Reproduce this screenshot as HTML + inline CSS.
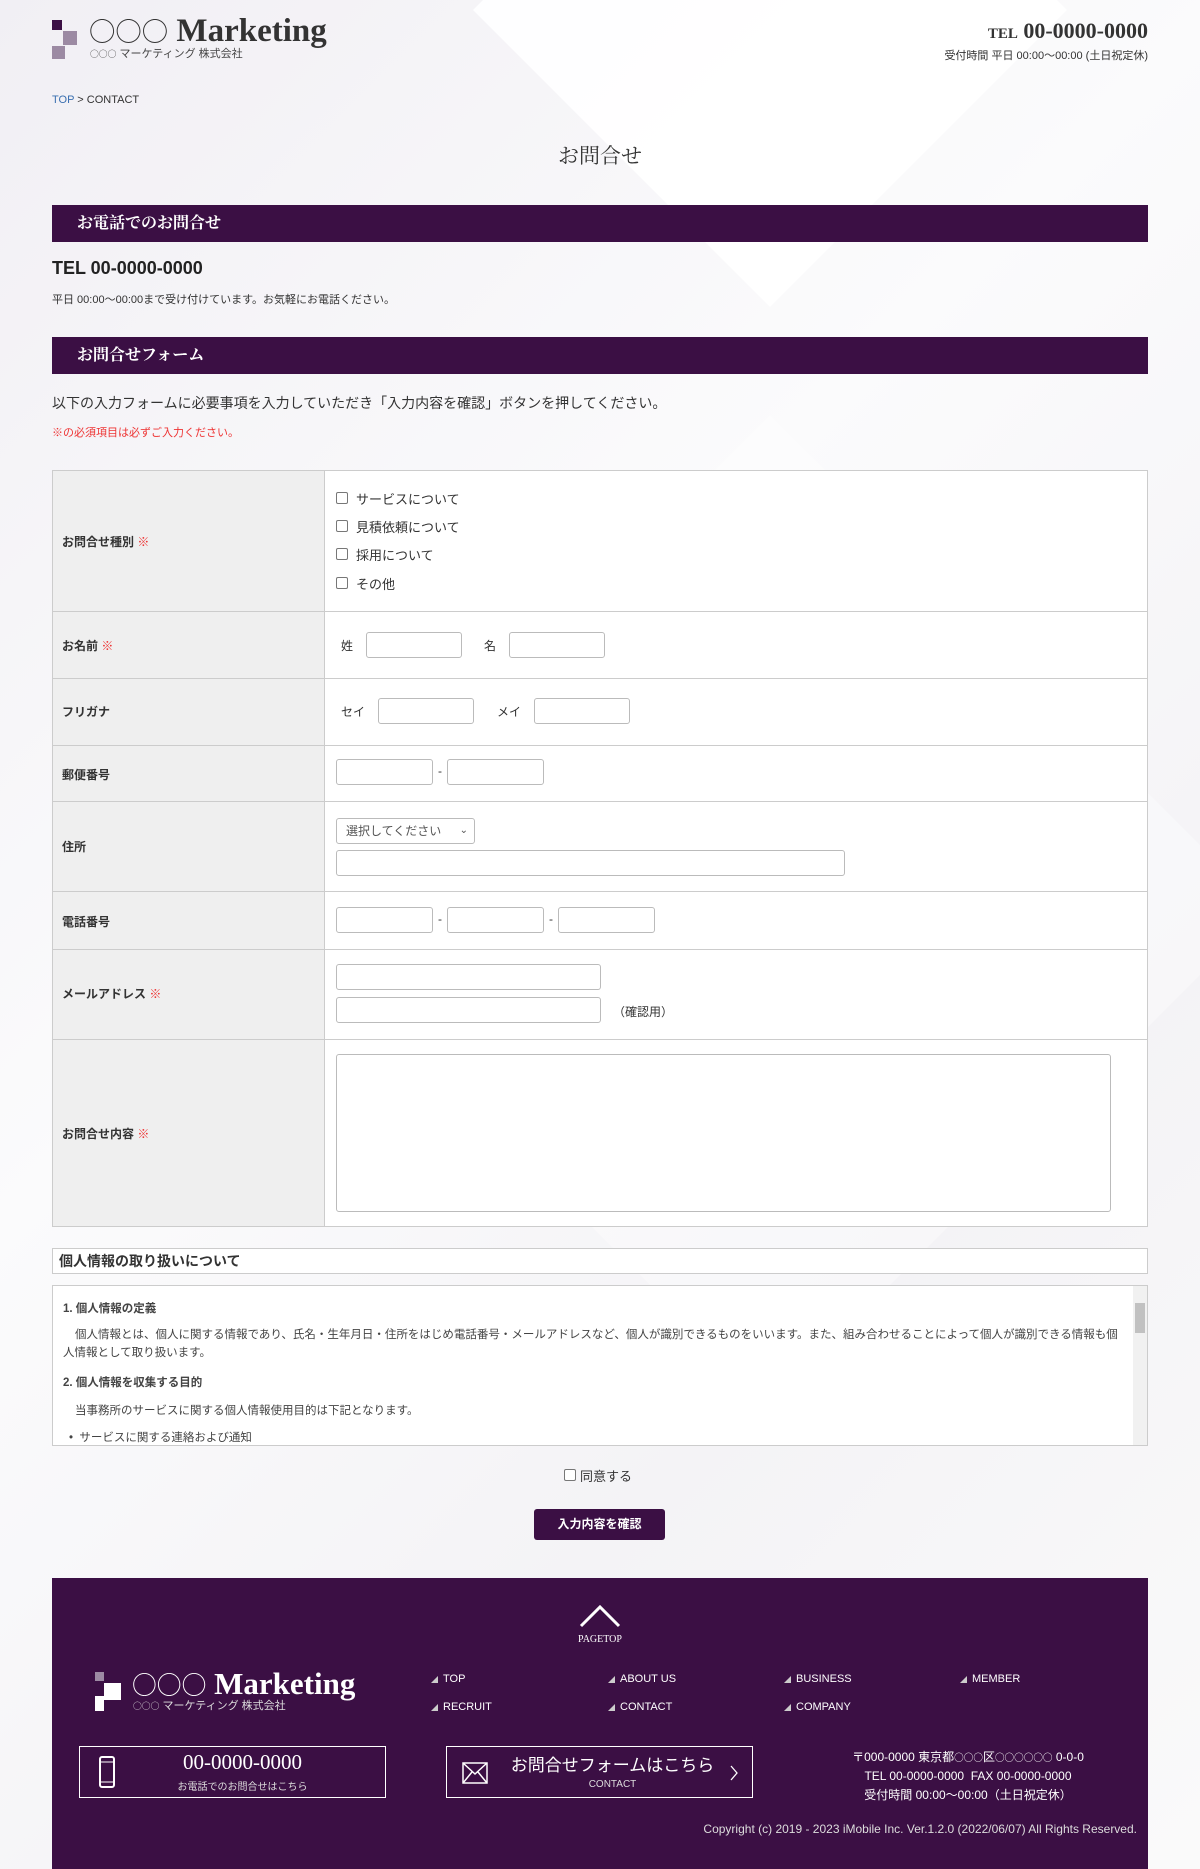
<!DOCTYPE html>
<html><head><meta charset="utf-8"><style>
*{margin:0;padding:0;box-sizing:border-box}
body{width:1200px;height:1869px;position:relative;overflow:hidden;font-family:"Liberation Sans","Noto Sans CJK JP",sans-serif;color:#333;background:#f7f6f9}
.a{position:absolute}
.bg1{left:0;top:0;width:1200px;height:1869px;background:linear-gradient(135deg,#f1eff4 0%,#fbfbfc 40%,#f4f3f6 70%,#fafafa 100%)}
.dia{background:#fff;transform:rotate(45deg)}
.serif{font-family:"Liberation Serif","Noto Serif CJK SC",serif}
.c{font-family:"Noto Sans CJK JP",sans-serif;font-weight:normal;font-size:.8em;line-height:1}
.bar{left:52px;width:1096px;height:37px;background:#3b0f44;color:#fff;font-size:16px;font-weight:bold;padding-left:25px;line-height:37px}
.in{position:absolute;border:1px solid #bbb;border-radius:3px;background:#fff;height:26px}
.t{font-size:12px;color:#333}
.cb{position:absolute;width:12px;height:12px;border:1px solid #777;border-radius:2px;background:#fff}
.row{position:absolute;left:52px;width:1096px;border-top:1px solid #ccc}
.lab{position:absolute;left:62px;font-size:12px;font-weight:bold;color:#333}
.req{color:#e33}
.fn{position:absolute;font-size:11px;color:#fff}
.fn:before{content:"◢";font-size:7px;margin-right:5px;color:#ccc}
</style></head><body>
<div class="a bg1"></div>
<div class="a dia" style="left:560px;top:-200px;width:420px;height:420px;opacity:.9"></div>
<div class="a dia" style="left:420px;top:560px;width:700px;height:700px;opacity:.35"></div>

<!-- header -->
<div class="a" style="left:52px;top:20px;width:10px;height:10px;background:#3b0f44"></div>
<div class="a" style="left:63px;top:31px;width:14px;height:14px;background:#9c8aa3"></div>
<div class="a" style="left:52px;top:46px;width:13px;height:13px;background:#9c8aa3"></div>
<div class="a serif" style="left:89px;top:14px;font-size:33px;line-height:34px;color:#333;font-weight:bold;white-space:nowrap"><span class="c">○○○</span> Marketing</div>
<div class="a" style="left:90px;top:48px;font-size:11px;line-height:13px;color:#444"><span class="c">○○○</span> マーケティング 株式会社</div>
<div class="a serif" style="right:52px;top:18px;font-size:22px;color:#333;font-weight:bold"><span style="font-size:15px">TEL</span> 00-0000-0000</div>
<div class="a" style="right:52px;top:47px;font-size:11px;color:#333">受付時間 平日 00:00～00:00 (土日祝定休)</div>
<div class="a" style="left:52px;top:94px;font-size:11px"><span style="color:#3a6fb0">TOP</span> &gt; CONTACT</div>
<div class="a serif" style="left:0;width:1200px;text-align:center;top:140px;font-size:21px;color:#333">お問合せ</div>

<div class="a bar serif" style="top:205px">お電話でのお問合せ</div>
<div class="a" style="left:52px;top:258px;font-size:18px;font-weight:bold;color:#222">TEL 00-0000-0000</div>
<div class="a" style="left:52px;top:291px;font-size:11px">平日 00:00～00:00まで受け付けています。お気軽にお電話ください。</div>

<div class="a bar serif" style="top:337px">お問合せフォーム</div>
<div class="a" style="left:52px;top:393px;font-size:14px">以下の入力フォームに必要事項を入力していただき「入力内容を確認」ボタンを押してください。</div>
<div class="a" style="left:52px;top:424px;font-size:11px;color:#e33">※の必須項目は必ずご入力ください。</div>

<!-- table -->
<div class="a" style="left:52px;top:470px;width:1096px;height:757px;border:1px solid #ccc;background:#fff"></div>
<div class="a" style="left:53px;top:471px;width:272px;height:755px;background:#efefef;border-right:1px solid #ccc"></div>
<div class="row" style="top:611px"></div><div class="row" style="top:678px"></div><div class="row" style="top:745px"></div><div class="row" style="top:801px"></div><div class="row" style="top:891px"></div><div class="row" style="top:949px"></div><div class="row" style="top:1039px"></div>
<div class="lab" style="top:533px">お問合せ種別 <span class="req">※</span></div>
<div class="lab" style="top:637px">お名前 <span class="req">※</span></div>
<div class="lab" style="top:703px">フリガナ</div>
<div class="lab" style="top:766px">郵便番号</div>
<div class="lab" style="top:838px">住所</div>
<div class="lab" style="top:913px">電話番号</div>
<div class="lab" style="top:985px">メールアドレス <span class="req">※</span></div>
<div class="lab" style="top:1125px">お問合せ内容 <span class="req">※</span></div>

<div class="cb" style="left:336px;top:492px"></div><div class="a t" style="left:356px;top:489px;font-size:13px">サービスについて</div>
<div class="cb" style="left:336px;top:520px"></div><div class="a t" style="left:356px;top:517px;font-size:13px">見積依頼について</div>
<div class="cb" style="left:336px;top:548px"></div><div class="a t" style="left:356px;top:545px;font-size:13px">採用について</div>
<div class="cb" style="left:336px;top:577px"></div><div class="a t" style="left:356px;top:574px;font-size:13px">その他</div>

<div class="a t" style="left:341px;top:637px">姓</div><div class="in" style="left:366px;top:632px;width:96px"></div>
<div class="a t" style="left:484px;top:637px">名</div><div class="in" style="left:509px;top:632px;width:96px"></div>
<div class="a t" style="left:341px;top:703px">セイ</div><div class="in" style="left:378px;top:698px;width:96px"></div>
<div class="a t" style="left:497px;top:703px">メイ</div><div class="in" style="left:534px;top:698px;width:96px"></div>

<div class="in" style="left:336px;top:759px;width:97px"></div><div class="a t" style="left:438px;top:764px">-</div><div class="in" style="left:447px;top:759px;width:97px"></div>
<div class="in" style="left:336px;top:818px;width:139px;font-size:12px;line-height:24px;padding-left:9px;color:#555">選択してください<span style="position:absolute;right:6px;font-size:10px">⌄</span></div>
<div class="in" style="left:336px;top:850px;width:509px"></div>
<div class="in" style="left:336px;top:907px;width:97px"></div><div class="a t" style="left:438px;top:912px">-</div><div class="in" style="left:447px;top:907px;width:97px"></div><div class="a t" style="left:549px;top:912px">-</div><div class="in" style="left:558px;top:907px;width:97px"></div>
<div class="in" style="left:336px;top:964px;width:265px"></div>
<div class="in" style="left:336px;top:997px;width:265px"></div><div class="a t" style="left:613px;top:1003px">（確認用）</div>
<div class="in" style="left:336px;top:1054px;width:775px;height:158px"></div>

<!-- privacy -->
<div class="a" style="left:52px;top:1248px;width:1096px;height:26px;border:1px solid #ccc;background:#fff;font-size:14px;font-weight:bold;padding-left:6px;line-height:24px">個人情報の取り扱いについて</div>
<div class="a" style="left:52px;top:1285px;width:1096px;height:161px;border:1px solid #ccc;background:#fff;overflow:hidden;font-size:11.5px;color:#444">
<div style="position:absolute;right:0;top:0;width:14px;height:159px;background:#f1f1f1"><div style="position:absolute;left:2px;top:17px;width:10px;height:30px;background:#c1c1c1"></div></div>
<div style="position:absolute;left:10px;top:14px;font-weight:bold">1. 個人情報の定義</div>
<div style="position:absolute;left:10px;top:40px;width:1060px;line-height:18px;text-indent:12px">個人情報とは、個人に関する情報であり、氏名・生年月日・住所をはじめ電話番号・メールアドレスなど、個人が識別できるものをいいます。また、組み合わせることによって個人が識別できる情報も個人情報として取り扱います。</div>
<div style="position:absolute;left:10px;top:88px;font-weight:bold">2. 個人情報を収集する目的</div>
<div style="position:absolute;left:22px;top:116px">当事務所のサービスに関する個人情報使用目的は下記となります。</div>
<div style="position:absolute;left:16px;top:143px">•&nbsp; サービスに関する連絡および通知</div>
</div>
<div class="cb" style="left:564px;top:1469px"></div><div class="a t" style="left:580px;top:1466px;font-size:13px">同意する</div>
<div class="a" style="left:534px;top:1509px;width:131px;height:31px;background:#3b0f44;border-radius:3px;color:#fff;font-size:12px;font-weight:bold;text-align:center;line-height:31px">入力内容を確認</div>

<!-- footer -->
<div class="a" style="left:52px;top:1578px;width:1096px;height:291px;background:#3b0f44"></div>
<svg class="a" style="left:579px;top:1604px" width="42" height="24"><path d="M2 22 L21 3 L40 22" stroke="#fff" stroke-width="3" fill="none"/></svg>
<div class="a serif" style="left:0;width:1200px;text-align:center;top:1634px;font-size:10px;color:#fff">PAGETOP</div>
<div class="a" style="left:95px;top:1672px;width:9px;height:9px;background:#9c8aa3"></div>
<div class="a" style="left:104px;top:1683px;width:17px;height:17px;background:#fff"></div>
<div class="a" style="left:95px;top:1696px;width:9px;height:15px;background:#fff"></div>
<div class="a serif" style="left:132px;top:1668px;font-size:31px;line-height:32px;color:#fff;font-weight:bold;white-space:nowrap"><span class="c">○○○</span> Marketing</div>
<div class="a" style="left:133px;top:1700px;font-size:11px;line-height:13px;color:#ddd"><span class="c">○○○</span> マーケティング 株式会社</div>
<div class="fn" style="left:431px;top:1673px">TOP</div><div class="fn" style="left:608px;top:1673px">ABOUT US</div><div class="fn" style="left:784px;top:1673px">BUSINESS</div><div class="fn" style="left:960px;top:1673px">MEMBER</div>
<div class="fn" style="left:431px;top:1701px">RECRUIT</div><div class="fn" style="left:608px;top:1701px">CONTACT</div><div class="fn" style="left:784px;top:1701px">COMPANY</div>
<div class="a" style="left:79px;top:1746px;width:307px;height:52px;border:1px solid #fff"></div>
<svg class="a" style="left:98px;top:1756px" width="18" height="32"><rect x="2" y="1" width="14" height="30" rx="2" stroke="#fff" stroke-width="2" fill="none"/><line x1="2" y1="6" x2="16" y2="6" stroke="#fff"/><line x1="2" y1="26" x2="16" y2="26" stroke="#fff"/></svg>
<div class="a serif" style="left:130px;top:1750px;width:225px;text-align:center;font-size:21px;color:#fff">00-0000-0000</div>
<div class="a" style="left:130px;top:1778px;width:225px;text-align:center;font-size:10px;color:#ddd">お電話でのお問合せはこちら</div>
<div class="a" style="left:446px;top:1746px;width:307px;height:52px;border:1px solid #fff"></div>
<svg class="a" style="left:462px;top:1762px" width="26" height="22"><rect x="1" y="1" width="24" height="20" stroke="#fff" stroke-width="1.5" fill="none"/><path d="M1 1 L13 12 L25 1 M1 21 L10 10 M25 21 L16 10" stroke="#fff" stroke-width="1.5" fill="none"/></svg>
<div class="a" style="left:500px;top:1751px;width:225px;text-align:center;font-size:17px;color:#fff">お問合せフォームはこちら</div>
<div class="a" style="left:500px;top:1779px;width:225px;text-align:center;font-size:10px;color:#ddd">CONTACT</div>
<svg class="a" style="left:729px;top:1764px" width="10" height="18"><path d="M2 2 L8 9 L2 16" stroke="#fff" stroke-width="1.3" fill="none"/></svg>
<div class="a" style="left:800px;top:1748px;width:336px;text-align:center;font-size:12px;color:#fff;line-height:19px">〒000-0000 東京都<span class="c">○○○</span>区<span class="c">○○○○○○</span> 0-0-0<br>TEL 00-0000-0000&nbsp; FAX 00-0000-0000<br>受付時間 00:00～00:00（土日祝定休）</div>
<div class="a" style="right:63px;top:1822px;font-size:12px;color:#ddd">Copyright (c) 2019 - 2023 iMobile Inc. Ver.1.2.0 (2022/06/07) All Rights Reserved.</div>
</body></html>
